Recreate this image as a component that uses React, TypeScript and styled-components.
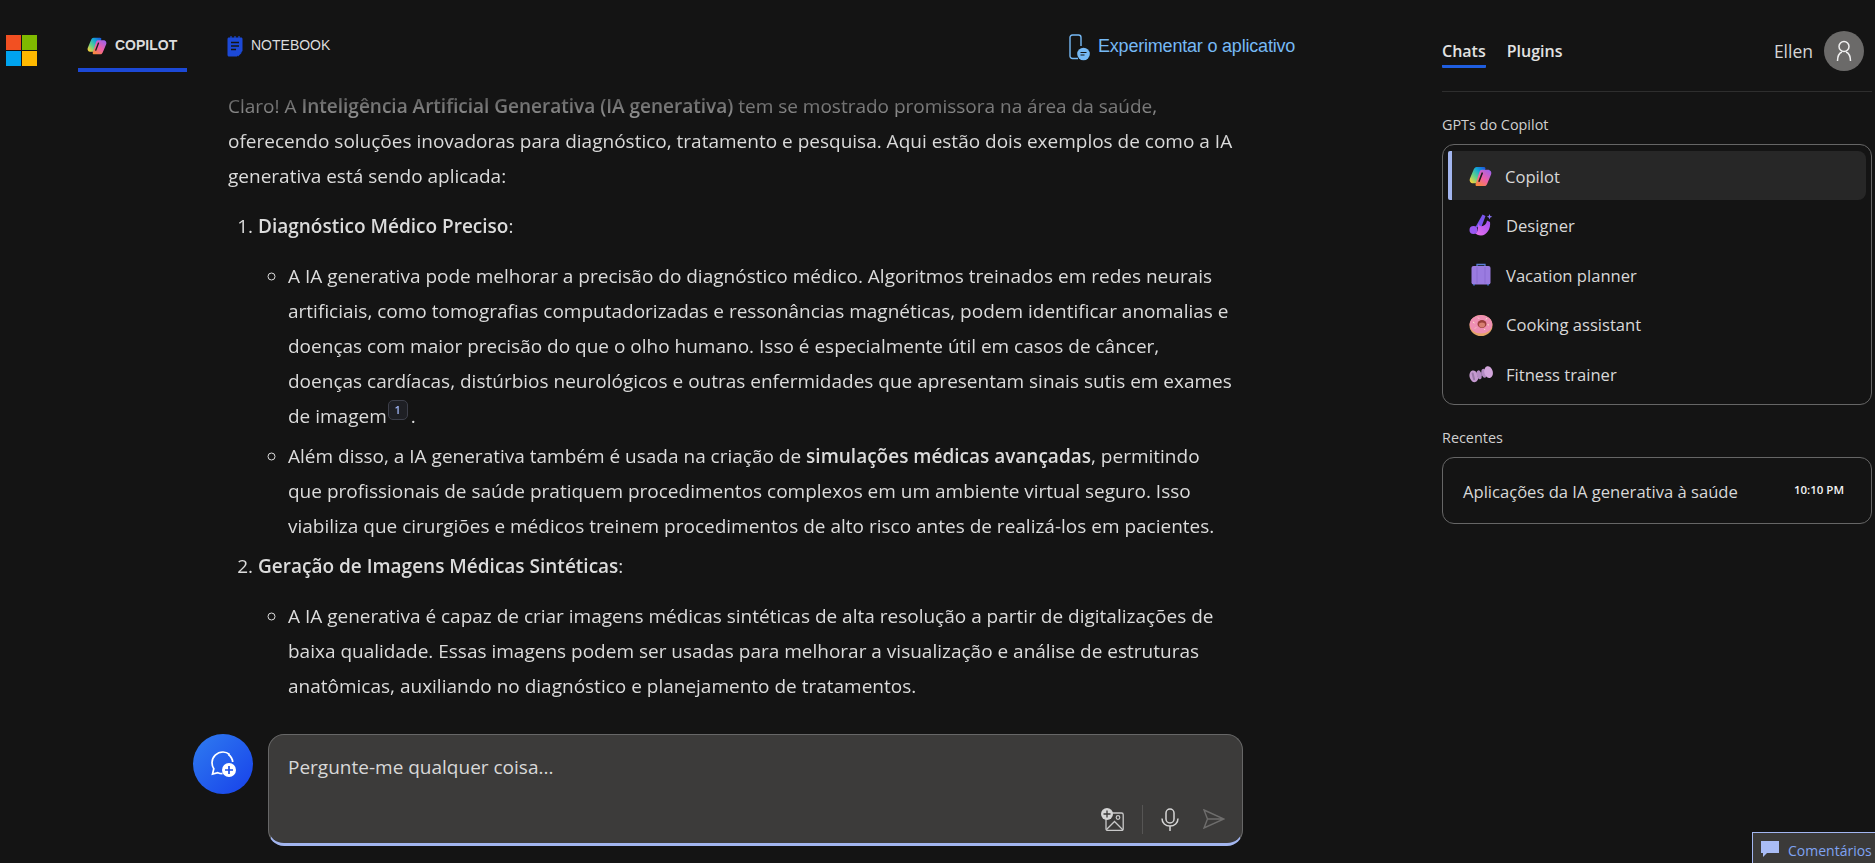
import React from 'react'
import styled, { createGlobalStyle } from 'styled-components'

const GlobalStyle = createGlobalStyle`
  html, body {
    margin: 0;
    height: 100%;
    background: #141414;
    overflow: hidden;
  }
  #root {
    height: 100%;
  }
`

const uiFont = `'Open Sans', 'Noto Sans', sans-serif`

const Page = styled.div`
  position: relative;
  display: flex;
  height: 100vh;
  overflow: hidden;
  background: #141414;
  color: #dcdcdc;
  font-family: ${uiFont};
`

const Main = styled.main`
  width: 1442px;
  flex: none;
  display: flex;
  flex-direction: column;
`

const TopBar = styled.header`
  height: 72px;
  flex: none;
  display: flex;
  padding-left: 6px;
`

const LogoCell = styled.div`
  padding-top: 35px;
  width: 72px;
  flex: none;
`

const TabButton = styled.div<{ $active?: boolean }>`
  height: 72px;
  box-sizing: border-box;
  width: ${p => (p.$active ? '109px' : '150px')};
  margin-right: ${p => (p.$active ? '40px' : '0')};
  padding: 36px 0 0 ${p => (p.$active ? '9px' : '0')};
  display: flex;
  align-items: flex-start;
  gap: 8px;
  border-bottom: 4px solid ${p => (p.$active ? '#1c49d6' : 'transparent')};
  font-family: 'Liberation Sans', Arial, sans-serif;
  font-size: 14px;
  line-height: 18px;
  font-weight: ${p => (p.$active ? 700 : 400)};
  color: #dcdcdc;
`

const TryApp = styled.div`
  margin-left: 692px;
  padding-top: 35px;
  display: flex;
  align-items: flex-start;
  gap: 8px;
  font-family: 'Liberation Sans', Arial, sans-serif;
  font-size: 18px;
  line-height: 22px;
  letter-spacing: -0.2px;
  color: #76b9f5;
  white-space: nowrap;

  svg {
    margin-top: -1px;
  }
`

const Messages = styled.div`
  flex: 1;
  min-height: 0;
  overflow: hidden;
  padding: 17px 0 0 228px;
  font-size: 19px;
  line-height: 35px;
  white-space: nowrap;
  mask-image: linear-gradient(to bottom, transparent 0, #000 70px);

  b {
    font-weight: 600;
  }
`

const Para = styled.p`
  margin: 0 0 15px;
`

const NumberedList = styled.ol`
  margin: 0;
  padding-left: 30px;
`

const Item = styled.li`
  margin-bottom: 5px;
`

const Bullets = styled.ul`
  margin: 15px 0 0;
  padding-left: 30px;
  list-style-type: circle;
`

const Cite = styled.sup`
  display: inline-block;
  width: 20px;
  height: 20px;
  margin: 0 3px 0 1px;
  box-sizing: border-box;
  border: 1px solid #3d3f4a;
  border-radius: 5px;
  background: #1e1f24;
  color: #9db2f0;
  font-size: 11px;
  line-height: 17px;
  font-weight: 600;
  text-align: center;
  vertical-align: 9px;
`

const Composer = styled.div`
  flex: none;
  height: 129px;
  display: flex;
  gap: 15px;
  padding-left: 193px;
`

const NewChat = styled.div`
  width: 60px;
  height: 60px;
  flex: none;
  border-radius: 50%;
  background: linear-gradient(135deg, #2f7cf0, #1740ea);
  display: flex;
  align-items: center;
  justify-content: center;
`

const InputBox = styled.div`
  width: 975px;
  height: 112px;
  box-sizing: border-box;
  display: flex;
  flex-direction: column;
  justify-content: space-between;
  padding: 16px 17px 9px 19px;
  background: #3c3b3a;
  border: 1px solid #676767;
  border-bottom: 3px solid #a3b6f0;
  border-radius: 16px;
  font-size: 19px;
  line-height: 32px;
  color: #d8d8d8;
`

const InputActions = styled.div`
  display: flex;
  align-items: center;
  justify-content: flex-end;
  gap: 18px;
  height: 30px;
`

const ActionDivider = styled.span`
  width: 1px;
  height: 29px;
  background: #565554;
`

const SendSlot = styled.span`
  display: flex;
  margin-left: 6px;
`

const Sidebar = styled.aside`
  width: 430px;
  flex: none;
  display: flex;
  flex-direction: column;
`

const SideTop = styled.div`
  height: 92px;
  flex: none;
  box-sizing: border-box;
  display: flex;
  align-items: flex-start;
  border-bottom: 1px solid #2e2e2e;
  margin-bottom: 23px;
`

const SideTab = styled.div<{ $active?: boolean }>`
  margin: 40px 21px 0 0;
  padding-bottom: 3px;
  height: 22px;
  line-height: 22px;
  font-size: 16px;
  font-weight: 600;
  color: #e2e2e2;
  border-bottom: ${p => (p.$active ? '3px solid #1f5ee0' : 'none')};
  border-radius: 1px;
`

const User = styled.div`
  margin-left: auto;
  margin-right: 8px;
  margin-top: 31px;
  display: flex;
  align-items: center;
  gap: 11px;
  font-size: 17.5px;
  color: #d6d6d6;
`

const Avatar = styled.div`
  width: 40px;
  height: 40px;
  border-radius: 50%;
  background: #6b6a69;
  display: flex;
  align-items: center;
  justify-content: center;
`

const SectionTitle = styled.div`
  font-size: 14.4px;
  line-height: 20px;
  color: #d0d0d0;
  margin-bottom: 9px;
`

const Card = styled.div`
  border: 1px solid #666;
  border-radius: 12px;
  box-sizing: border-box;
`

const GptCard = styled(Card)`
  height: 261px;
  padding: 6px 5px 5px;
  margin-bottom: 23px;
`

const GptRow = styled.div<{ $active?: boolean }>`
  height: ${p => (p.$active ? '49px' : '49.7px')};
  box-sizing: border-box;
  padding-top: 1px;
  display: flex;
  align-items: center;
  gap: 13px;
  font-size: 16.6px;
  color: #d8d8d8;
  background: ${p => (p.$active ? '#272727' : 'transparent')};
  border-radius: 8px;
  border-left: ${p => (p.$active ? '4px solid #a3b6f0' : 'none')};
  border-top-left-radius: ${p => (p.$active ? '2px' : '8px')};
  border-bottom-left-radius: ${p => (p.$active ? '2px' : '8px')};
  margin-left: ${p => (p.$active ? '0' : '4px')};
  padding-left: 17px;
`

const RecentCard = styled(Card)`
  height: 67px;
  display: flex;
  align-items: center;
  justify-content: space-between;
  padding: 1px 27px 0 20px;
  font-size: 16.6px;
  color: #d8d8d8;
`

const Time = styled.span`
  font-size: 11.5px;
  font-weight: 600;
  color: #f2f2f2;
  margin-top: -3px;
`

const Feedback = styled.div`
  position: absolute;
  left: 1752px;
  top: 832px;
  width: 140px;
  height: 40px;
  box-sizing: border-box;
  display: flex;
  align-items: flex-start;
  gap: 9px;
  padding: 8px 0 0 8px;
  background: #3b3a39;
  border: 1px solid #a3b6f0;
  color: #7fa3f2;
  font-size: 14px;
  line-height: 20px;
`

const CopilotLogo = ({ id, size = 22 }: { id: string; size?: number }) => (
  <svg width={size} height={size} viewBox="0 0 24 24" style={{ flex: 'none' }}>
    <defs>
      <linearGradient id={`${id}a`} x1="0" y1="0.85" x2="0.85" y2="0">
        <stop offset="0" stopColor="#f7d33a" />
        <stop offset="0.35" stopColor="#5fd08a" />
        <stop offset="0.7" stopColor="#12a5d8" />
        <stop offset="1" stopColor="#1a5fe0" />
      </linearGradient>
      <linearGradient id={`${id}b`} x1="0.2" y1="1" x2="0.9" y2="0">
        <stop offset="0" stopColor="#f8883a" />
        <stop offset="0.45" stopColor="#ef5fa8" />
        <stop offset="1" stopColor="#9a62f0" />
      </linearGradient>
    </defs>
    <path
      d="M8 2h7.500c1.500 0 2 1 1.500 2.500L13 17c-.4 1.200-1.300 2-2.500 2H4.500C1.500 19 0 16.500 1 14L5 4.500C5.600 3 6.500 2 8 2z"
      fill={`url(#${id}a)`}
    />
    <path
      d="M16 22H8.500c-1.500 0-2-1-1.500-2.500L11 7c.4-1.200 1.300-2 2.500-2h6C22.500 5 24 7.500 23 10L19 19.500C18.400 21 17.500 22 16 22z"
      fill={`url(#${id}b)`}
    />
    <path d="M13.800 8.500L10.500 17" stroke="#1b1b1b" strokeWidth="1.600" strokeLinecap="round" />
  </svg>
)

const DesignerIcon = () => (
  <svg width="24" height="24" viewBox="0 0 24 24" style={{ flex: 'none' }}>
    <defs>
      <linearGradient id="des" x1="0" y1="1" x2="1" y2="0">
        <stop offset="0" stopColor="#ec72ee" />
        <stop offset="1" stopColor="#a050f0" />
      </linearGradient>
    </defs>
    <path d="M6.500 14L13.500 1.500l3 1.500-4.500 12z" fill="#7a55ee" />
    <path d="M9 9.500c0 4 5 5.500 8 1 .5-1 1-2.500 1-3l3 1.500c1 6-3 13.500-9 13.500-3 0-4.500-1-6-2.500 4-1 3-7 3-10.500z" fill="url(#des)" />
    <circle cx="4.500" cy="17" r="4" fill="#9a58f2" />
    <path d="M20.500 1l.8 2 2 .8-2 .8-.8 2-.8-2-2-.8 2-.8z" fill="#8a74f5" />
  </svg>
)

const SuitcaseIcon = () => (
  <svg width="24" height="24" viewBox="0 0 24 24" style={{ flex: 'none' }}>
    <path d="M8 3.500V1.500h8v2" fill="none" stroke="#5b7fd8" strokeWidth="1.300" />
    <rect x="2.500" y="3" width="19" height="18.500" rx="2" fill="#9a7be0" />
    <path d="M8 4v16.500M16 4v16.500" stroke="#8a6cd2" strokeWidth="1" />
    <path d="M5 21v1.500M19 21v1.500" stroke="#4a7ad8" strokeWidth="1.500" />
  </svg>
)

const DonutIcon = () => (
  <svg width="24" height="24" viewBox="0 0 24 24" style={{ flex: 'none' }}>
    <ellipse cx="12" cy="12.500" rx="11.500" ry="10.500" fill="#e5a468" />
    <ellipse cx="12" cy="11.300" rx="11.300" ry="9.300" fill="#ee8fb2" />
    <ellipse cx="13" cy="11" rx="4.500" ry="4" fill="#9a3f3a" />
    <ellipse cx="13" cy="12" rx="3" ry="2.400" fill="#d77f70" />
    <path d="M4 9l1.500 1M9 4.500l1 1.200M18 5l-1 1.500M20 12l-1.500-.3M6 15.500l1-1M16 17l-.8-1.200" stroke="#f7e6c8" strokeWidth="1" />
  </svg>
)

const DumbbellIcon = () => (
  <svg width="24" height="24" viewBox="0 0 24 24" style={{ flex: 'none' }}>
    <g transform="rotate(-14 12 12)">
      <ellipse cx="4.500" cy="12.500" rx="4.300" ry="6" fill="#c59ad0" />
      <rect x="3" y="8.500" width="2" height="8" rx="1" fill="#9a78a8" />
      <rect x="8" y="10.500" width="8" height="3.500" fill="#8a6a98" />
      <ellipse cx="10" cy="12.300" rx="2.300" ry="4.500" fill="#b48cc4" />
      <ellipse cx="15" cy="12" rx="2.300" ry="4.500" fill="#b48cc4" />
      <ellipse cx="19.800" cy="12" rx="4.200" ry="6" fill="#d3a6dc" />
    </g>
  </svg>
)

const MicrosoftLogo = () => (
  <svg width="31" height="31" viewBox="0 0 31 31">
    <rect width="15" height="15" fill="#f25022" />
    <rect x="16" width="15" height="15" fill="#7fba00" />
    <rect y="16" width="15" height="15" fill="#00a4ef" />
    <rect x="16" y="16" width="15" height="15" fill="#ffb900" />
  </svg>
)

const NotebookIcon = () => (
  <svg width="16" height="21" viewBox="0 0 16 21" style={{ flex: 'none' }}>
    <path
      d="M2 1.500h12c1 0 1.500.6 1.500 1.500v12L10 20.500H2c-1 0-1.500-.6-1.500-1.500V3c0-.9.500-1.500 1.500-1.500z"
      fill="#1c49d6"
    />
    <path d="M11 16.500h4l-4 4z" fill="#1c49d6" />
    <path d="M4 6.500h8M4 10h8M4 13.500h5" stroke="#141414" strokeWidth="1.300" />
    <path d="M4 0v2M8 0v2M12 0v2" stroke="#1c49d6" strokeWidth="1.200" />
  </svg>
)

const PhoneIcon = () => (
  <svg width="21" height="27" viewBox="0 0 21 27" style={{ flex: 'none', overflow: 'visible' }}>
    <path
      d="M9 24.500H3.500C2 24.500 1 23.500 1 22V3.500C1 2 2 1 3.500 1h6C11 1 12 2 12 3.500V12"
      fill="none"
      stroke="#76b9f5"
      strokeWidth="1.400"
    />
    <circle cx="14.500" cy="20" r="6.300" fill="#76b9f5" />
    <path d="M11.500 18.500h6M11.500 21h4" stroke="#141414" strokeWidth="1.200" />
  </svg>
)

const ChatPlusIcon = () => (
  <svg width="28" height="28" viewBox="0 0 28 28" fill="none">
    <path
      d="M19.500 4.500C17.800 3 15.500 2 13 2 7 2 2 6.800 2 12.800c0 2.200.7 4.300 1.800 6L2.500 24l5.300-1.300c1.400.7 3 1 4.700 1"
      stroke="#fff"
      strokeWidth="1.700"
      transform="translate(1 0)"
    />
    <path d="M19.500 4.500c2.500 2 4 4.800 4.200 7.500" stroke="#fff" strokeWidth="1.700" />
    <circle cx="20" cy="20" r="7" fill="#fff" />
    <path d="M20 16v8M16 20h8" stroke="#1d4fe8" strokeWidth="1.700" />
  </svg>
)

const ImagePlusIcon = () => (
  <svg width="23" height="23" viewBox="0 0 23 23" fill="none">
    <path d="M10 5h10.500c1 0 1.700.7 1.700 1.700v14.100c0 1-.7 1.700-1.700 1.700H6.700c-1 0-1.700-.7-1.700-1.700V11" stroke="#c9c9c9" strokeWidth="1.300" />
    <path d="M5.500 21.500l8-8 8.500 8.500" stroke="#c9c9c9" strokeWidth="1.300" />
    <circle cx="17" cy="9.500" r="1.800" stroke="#c9c9c9" strokeWidth="1.200" />
    <circle cx="6" cy="6" r="6" fill="#d5d5d5" />
    <path d="M6 2.500v7M2.500 6h7" stroke="#3c3b3a" strokeWidth="1.300" />
  </svg>
)

const MicIcon = () => (
  <svg width="18" height="23" viewBox="0 0 18 23" fill="none" stroke="#d5d5d5" strokeWidth="1.500">
    <rect x="5" y="1" width="8" height="14" rx="4" />
    <path d="M1 10.500c0 4.500 3.500 7.500 8 7.500s8-3 8-7.500M9 18v5" />
  </svg>
)

const SendIcon = () => (
  <svg width="22" height="20" viewBox="0 0 22 20" fill="none" stroke="#6e6d6c" strokeWidth="1.400">
    <path d="M1 1l20 9-20 9 3.500-9zM4.500 10H21" />
  </svg>
)

const PersonIcon = () => (
  <svg width="20" height="22" viewBox="0 0 20 22" fill="none" stroke="#f0f0f0" strokeWidth="1.500">
    <circle cx="10" cy="6.500" r="5" />
    <path d="M3.500 21c0-5 2-8 4.500-9M16.500 21c0-5-2-8-4.500-9" />
  </svg>
)

const CommentIcon = () => (
  <svg width="18" height="16" viewBox="0 0 18 16" style={{ flex: 'none' }}>
    <path d="M0 0h18v12H6l-4 4v-4H0z" fill="#a9bcf5" />
  </svg>
)

export default function App() {
  return (
    <Page>
      <GlobalStyle />
      <Main>
        <TopBar>
          <LogoCell>
            <MicrosoftLogo />
          </LogoCell>
          <TabButton $active>
            <CopilotLogo id="tab" size={20} />
            COPILOT
          </TabButton>
          <TabButton>
            <NotebookIcon />
            NOTEBOOK
          </TabButton>
          <TryApp>
            <PhoneIcon />
            Experimentar o aplicativo
          </TryApp>
        </TopBar>
        <Messages>
          <Para>
            Claro! A <b>Inteligência Artificial Generativa (IA generativa)</b> tem se mostrado promissora na área da saúde,
            <br />
            oferecendo soluções inovadoras para diagnóstico, tratamento e pesquisa. Aqui estão dois exemplos de como a IA
            <br />
            generativa está sendo aplicada:
          </Para>
          <NumberedList>
            <Item>
              <b>Diagnóstico Médico Preciso</b>:
              <Bullets>
                <Item>
                  A IA generativa pode melhorar a precisão do diagnóstico médico. Algoritmos treinados em redes neurais
                  <br />
                  artificiais, como tomografias computadorizadas e ressonâncias magnéticas, podem identificar anomalias e
                  <br />
                  doenças com maior precisão do que o olho humano. Isso é especialmente útil em casos de câncer,
                  <br />
                  doenças cardíacas, distúrbios neurológicos e outras enfermidades que apresentam sinais sutis em exames
                  <br />
                  de imagem<Cite>1</Cite>.
                </Item>
                <Item>
                  Além disso, a IA generativa também é usada na criação de <b>simulações médicas avançadas</b>, permitindo
                  <br />
                  que profissionais de saúde pratiquem procedimentos complexos em um ambiente virtual seguro. Isso
                  <br />
                  viabiliza que cirurgiões e médicos treinem procedimentos de alto risco antes de realizá-los em pacientes.
                </Item>
              </Bullets>
            </Item>
            <Item>
              <b>Geração de Imagens Médicas Sintéticas</b>:
              <Bullets>
                <Item>
                  A IA generativa é capaz de criar imagens médicas sintéticas de alta resolução a partir de digitalizações de
                  <br />
                  baixa qualidade. Essas imagens podem ser usadas para melhorar a visualização e análise de estruturas
                  <br />
                  anatômicas, auxiliando no diagnóstico e planejamento de tratamentos.
                </Item>
              </Bullets>
            </Item>
          </NumberedList>
        </Messages>
        <Composer>
          <NewChat>
            <ChatPlusIcon />
          </NewChat>
          <InputBox>
            Pergunte-me qualquer coisa...
            <InputActions>
              <ImagePlusIcon />
              <ActionDivider />
              <MicIcon />
              <SendSlot>
                <SendIcon />
              </SendSlot>
            </InputActions>
          </InputBox>
        </Composer>
      </Main>
      <Sidebar>
        <SideTop>
          <SideTab $active>Chats</SideTab>
          <SideTab>Plugins</SideTab>
          <User>
            Ellen
            <Avatar>
              <PersonIcon />
            </Avatar>
          </User>
        </SideTop>
        <SectionTitle>GPTs do Copilot</SectionTitle>
        <GptCard>
          <GptRow $active>
            <CopilotLogo id="side" size={23} />
            Copilot
          </GptRow>
          <GptRow>
            <DesignerIcon />
            Designer
          </GptRow>
          <GptRow>
            <SuitcaseIcon />
            Vacation planner
          </GptRow>
          <GptRow>
            <DonutIcon />
            Cooking assistant
          </GptRow>
          <GptRow>
            <DumbbellIcon />
            Fitness trainer
          </GptRow>
        </GptCard>
        <SectionTitle>Recentes</SectionTitle>
        <RecentCard>
          Aplicações da IA generativa à saúde
          <Time>10:10 PM</Time>
        </RecentCard>
      </Sidebar>
      <Feedback>
        <CommentIcon />
        Comentários
      </Feedback>
    </Page>
  )
}
